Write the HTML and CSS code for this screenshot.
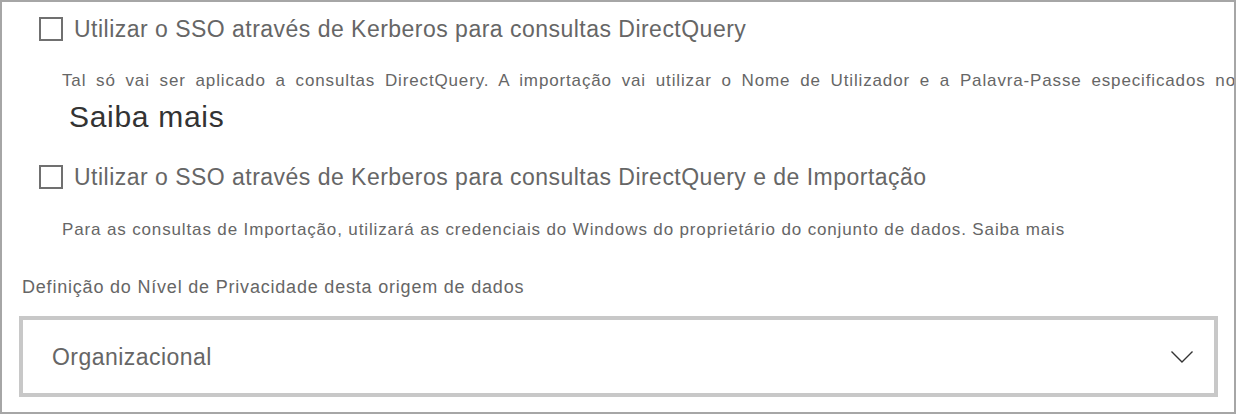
FILE: index.html
```html
<!DOCTYPE html>
<html>
<head>
<meta charset="utf-8">
<link rel="stylesheet" href="styles.css">
</head>
<body>
<div class="panel">
  <div class="check-row first">
    <span class="box"></span>
    <span class="check-label">Utilizar o SSO através de Kerberos para consultas DirectQuery</span>
  </div>
  <div class="desc-clip">
    <p class="desc justified">Tal só vai ser aplicado a consultas DirectQuery. A importação vai utilizar o Nome de Utilizador e a Palavra-Passe especificados no</p>
  </div>
  <div class="saiba">Saiba mais</div>
  <div class="check-row second">
    <span class="box"></span>
    <span class="check-label">Utilizar o SSO através de Kerberos para consultas DirectQuery e de Importação</span>
  </div>
  <p class="desc desc2">Para as consultas de Importação, utilizará as credenciais do Windows do proprietário do conjunto de dados. Saiba mais</p>
  <div class="field-label">Definição do Nível de Privacidade desta origem de dados</div>
  <div class="dropdown">
    <span class="dropdown-value">Organizacional</span>
    <svg class="chevron" width="22" height="12" viewBox="0 0 22 12"><path d="M0.5 0.5 L11 11 L21.5 0.5" fill="none" stroke="#333" stroke-width="1.4"/></svg>
  </div>
</div>
</body>
</html>
```

FILE: styles.css
```css
html, body {
  margin: 0;
  padding: 0;
  background: #fff;
}
.panel {
  box-sizing: border-box;
  width: 1236px;
  height: 414px;
  border: 2px solid #a6a6a6;
  overflow: hidden;
  font-family: "Liberation Sans", Arial, sans-serif;
  color: #666;
  display: flex;
  flex-direction: column;
}
.check-row {
  display: flex;
  align-items: center;
  height: 24px;
  padding-left: 37px;
  gap: 11px;
}
.check-row.first { margin-top: 15px; }
.check-row.second { margin-top: 31px; }
.box {
  box-sizing: border-box;
  width: 24px;
  height: 24px;
  border: 2px solid #707070;
  flex: none;
}
.check-label {
  font-size: 23px;
  letter-spacing: 0.48px;
  line-height: 24px;
  white-space: nowrap;
}
.desc-clip {
  margin-top: 30px;
  padding-left: 60px;
  overflow: hidden;
  height: 20px;
}
.desc {
  margin: 0;
  font-size: 17px;
  letter-spacing: 0.86px;
  line-height: 20px;
  white-space: nowrap;
}
.justified {
  width: 1174px;
  white-space: normal;
  text-align: justify;
  text-align-last: justify;
}
.desc2 {
  margin-top: 31px;
  padding-left: 60px;
}
.saiba {
  margin-top: 9px;
  padding-left: 67px;
  font-size: 30px;
  letter-spacing: 0.7px;
  line-height: 34px;
  color: #333;
}
.field-label {
  margin-top: 37px;
  padding-left: 20px;
  font-size: 18px;
  letter-spacing: 0.8px;
  line-height: 20px;
}
.dropdown {
  box-sizing: border-box;
  margin-top: 19px;
  margin-left: 17px;
  width: 1199px;
  height: 81px;
  border: 4px solid #c8c8c8;
  display: flex;
  align-items: center;
  justify-content: space-between;
  padding: 0 21px 0 29px;
}
.dropdown-value {
  font-size: 23px;
  letter-spacing: 0.45px;
  line-height: 26px;
}
.chevron {
  display: block;
}
```
